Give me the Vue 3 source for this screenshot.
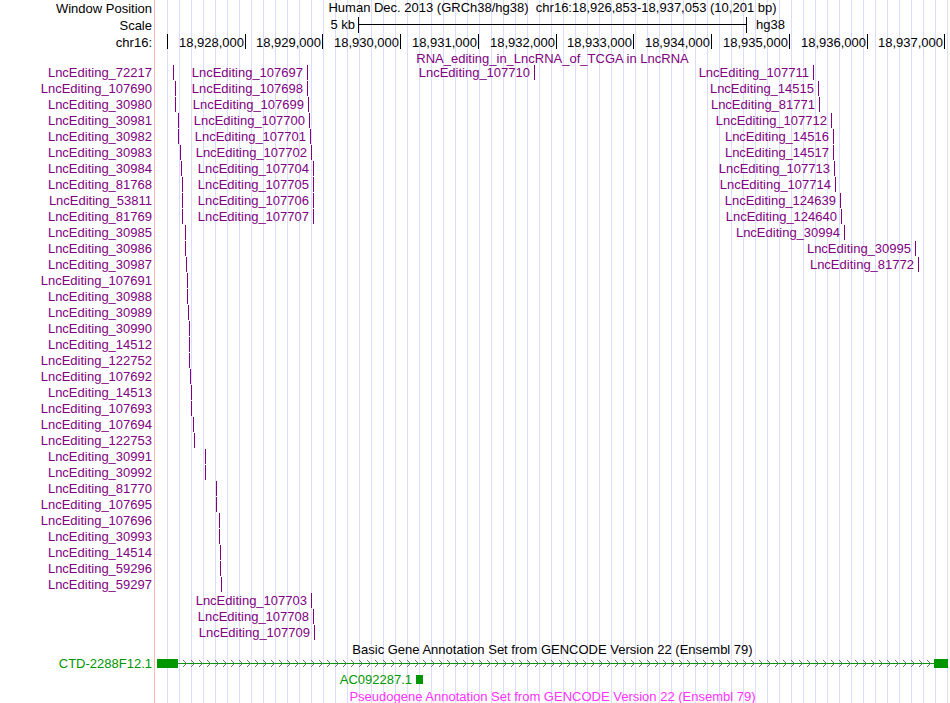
<script setup>
const PLOT_UNITS = 795

const at = (x) => ({ left: `${(x / PLOT_UNITS) * 100}%` })
const span = (x, width) => ({
  left: `${(x / PLOT_UNITS) * 100}%`,
  width: `${(width / PLOT_UNITS) * 100}%`,
})

const ticks = [
  { x: 12, label: '' },
  { x: 90, label: '18,928,000' },
  { x: 167, label: '18,929,000' },
  { x: 245, label: '18,930,000' },
  { x: 323, label: '18,931,000' },
  { x: 401, label: '18,932,000' },
  { x: 478, label: '18,933,000' },
  { x: 556, label: '18,934,000' },
  { x: 634, label: '18,935,000' },
  { x: 712, label: '18,936,000' },
  { x: 789, label: '18,937,000' },
]

// Features whose names fit only in the left margin: [id, x]
const margin = [
  [72217, 18], [107690, 20], [30980, 20], [30981, 23], [30982, 23], [30983, 25],
  [30984, 26], [81768, 27], [53811, 27], [81769, 27], [30985, 30], [30986, 30],
  [30987, 31], [107691, 32], [30988, 32], [30989, 33], [30990, 34], [14512, 34],
  [122752, 34], [107692, 35], [14513, 36], [107693, 36], [107694, 38], [122753, 39],
  [30991, 50], [30992, 50], [81770, 61], [107695, 61], [107696, 64], [30993, 64],
  [14514, 65], [59296, 65], [59297, 66],
]

// Features named beside their mark: [row, id, x]
const inline = [
  [0, 107697, 152], [1, 107698, 152], [2, 107699, 153], [3, 107700, 154],
  [4, 107701, 155], [5, 107702, 156], [6, 107704, 158], [7, 107705, 158],
  [8, 107706, 158], [9, 107707, 158], [0, 107710, 379],
  [0, 107711, 658], [1, 14515, 663], [2, 81771, 664], [3, 107712, 676],
  [4, 14516, 678], [5, 14517, 678], [6, 107713, 679], [7, 107714, 680],
  [8, 124639, 685], [9, 124640, 686], [10, 30994, 689], [11, 30995, 760],
  [12, 81772, 763], [33, 107703, 156], [34, 107708, 158], [35, 107709, 159],
]

const rows = Array.from({ length: 36 }, (_, row) => ({
  name: margin[row] ? `LncEditing_${margin[row][0]}` : '',
  features: [
    ...(margin[row] ? [{ x: margin[row][1], label: '' }] : []),
    ...inline
      .filter(([r]) => r === row)
      .map(([, id, x]) => ({ x, label: `LncEditing_${id}` })),
  ],
}))
</script>

<template>
  <main class="browser">
    <header>
      <div class="row head">
        <div class="name">Window Position</div>
        <div class="plot position">Human Dec. 2013 (GRCh38/hg38)&nbsp;&nbsp;chr16:18,926,853-18,937,053 (10,201 bp)</div>
      </div>
      <div class="row head">
        <div class="name">Scale</div>
        <div class="plot">
          <div class="scale" :style="span(203, 389)">
            <span class="scale-size">5 kb</span>
            <span class="scale-db">hg38</span>
          </div>
        </div>
      </div>
      <div class="row ruler">
        <div class="name">chr16:</div>
        <div class="plot">
          <div v-for="tick in ticks" :key="tick.x" class="tick" :style="at(tick.x)">
            <span v-if="tick.label" class="tick-label">{{ tick.label }}</span>
          </div>
        </div>
      </div>
    </header>

    <section class="editing">
      <h2 class="title">RNA_editing_in_LncRNA_of_TCGA in LncRNA</h2>
      <div v-for="(row, i) in rows" :key="i" class="row">
        <div class="name">{{ row.name }}</div>
        <div class="plot">
          <div v-for="feature in row.features" :key="feature.x" class="mark" :style="at(feature.x)">
            <span v-if="feature.label" class="mark-label">{{ feature.label }}</span>
          </div>
        </div>
      </div>
    </section>

    <section class="genes">
      <h2 class="title basic">Basic Gene Annotation Set from GENCODE Version 22 (Ensembl 79)</h2>
      <div class="row">
        <div class="name">CTD-2288F12.1</div>
        <div class="plot">
          <svg class="intron" :style="span(23, 756)" aria-hidden="true">
            <defs>
              <pattern id="strand" x="5" y="0" width="8" height="7" patternUnits="userSpaceOnUse">
                <path d="M0 0h1v1h-1zM1 1h1v1h-1zM2 2h1v1h-1zM3 3h1v1h-1zM2 4h1v1h-1zM1 5h1v1h-1zM0 6h1v1h-1z" />
              </pattern>
            </defs>
            <rect class="intron-line" x="0" y="3" width="100%" height="1" />
            <rect width="100%" height="7" fill="url(#strand)" />
          </svg>
          <div class="exon" :style="span(2, 21)"></div>
          <div class="exon" :style="span(779, 14)"></div>
        </div>
      </div>
      <div class="row">
        <div class="name"></div>
        <div class="plot">
          <div class="exon" :style="span(261, 7)">
            <span class="mark-label gene-label">AC092287.1</span>
          </div>
        </div>
      </div>
    </section>

    <section class="pseudo">
      <h2 class="title">Pseudogene Annotation Set from GENCODE Version 22 (Ensembl 79)</h2>
    </section>
  </main>
</template>

<style>
body {
  margin: 0;
  background: #fff;
}
</style>

<style scoped>
.browser {
  min-height: 100vh;
  overflow: hidden;
  color: #000;
  font: 13px/16px "Liberation Sans", Arial, Helvetica, sans-serif;
  white-space: nowrap;
  background:
    linear-gradient(to right, #fff 154px, #ffb4b4 154px, #ffb4b4 155px, #fff 155px, #fff 156px, transparent 156px),
    repeating-linear-gradient(to right, transparent 0, transparent 11px, #dcdcff 11px, #dcdcff 12px);
}

.row {
  display: grid;
  grid-template-columns: 155px 1fr;
  height: 16px;
}

.head {
  height: 17px;
  line-height: 17px;
}

.ruler {
  line-height: 17px;
}

.name {
  padding-right: 3px;
  text-align: right;
}

.plot {
  position: relative;
}

.position {
  line-height: 16px;
  text-align: center;
}

.title {
  height: 15px;
  margin: 0 0 0 155px;
  font-size: 13px;
  font-weight: 400;
  line-height: 17px;
  text-align: center;
}

.scale {
  position: absolute;
  top: 0;
  box-sizing: border-box;
  height: 16px;
  border: solid #000;
  border-width: 0 1px;
  background: linear-gradient(#000, #000) 0 7px / 100% 1px no-repeat;
}

.scale-size,
.scale-db {
  position: absolute;
  top: 0;
  line-height: 15px;
}

.scale-size {
  right: 100%;
  padding-right: 4px;
}

.scale-db {
  left: 100%;
  padding-left: 10px;
}

.tick,
.mark {
  position: absolute;
  top: 0;
  width: 1px;
  height: 15px;
}

.tick {
  background: #000;
}

.tick-label {
  position: absolute;
  top: 0;
  right: 2px;
}

.mark {
  background: #800080;
}

.mark-label {
  position: absolute;
  top: 0;
  right: 100%;
  padding-right: 4px;
}

.editing {
  color: #800080;
}

.genes {
  color: #009600;
}

.basic {
  color: #000;
}

.exon {
  position: absolute;
  top: 3px;
  height: 9px;
  background: #009600;
}

.gene-label {
  top: -3px;
}

.intron {
  position: absolute;
  top: 4px;
  height: 7px;
}

.intron-line {
  fill: #009600;
}

.intron path {
  fill: #707070;
}

.pseudo {
  color: #ff33ff;
}
</style>
